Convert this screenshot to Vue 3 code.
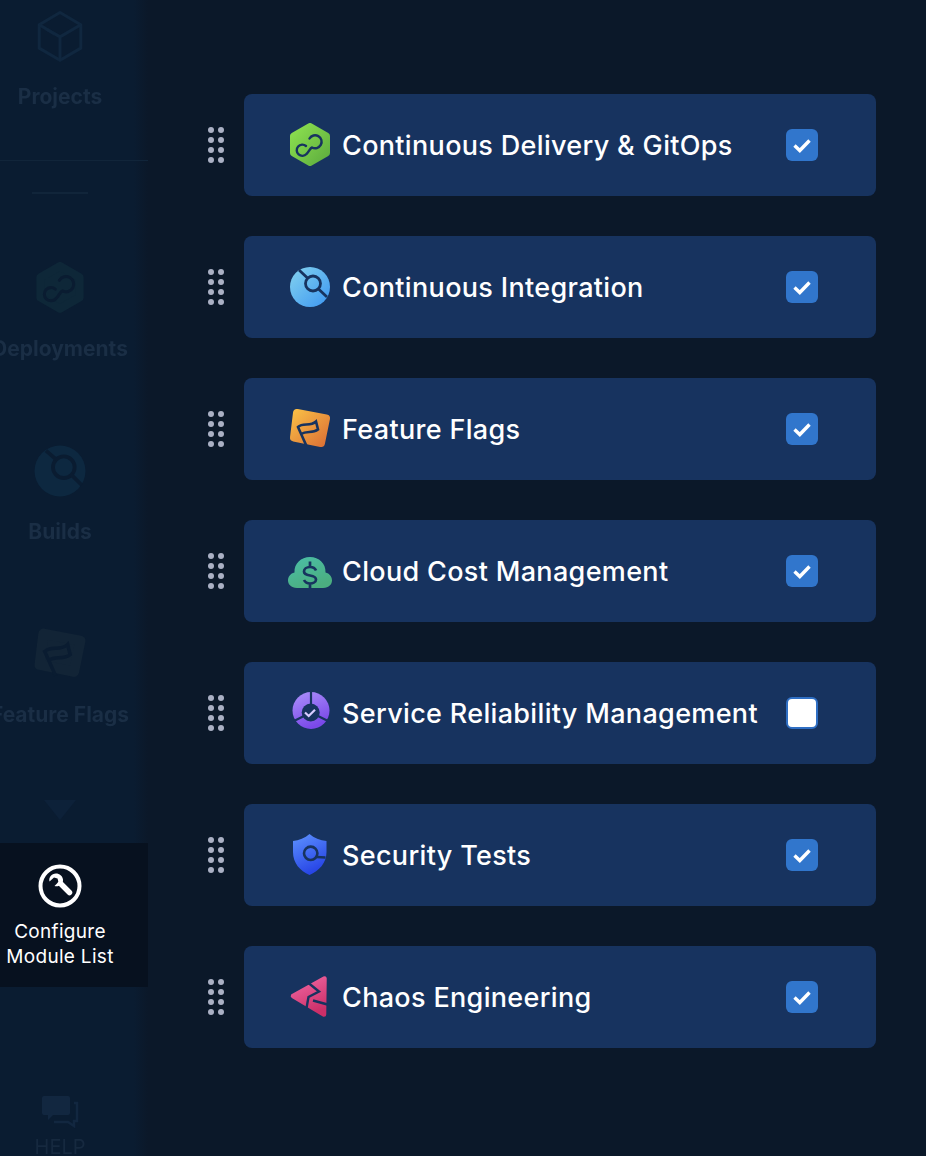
<script setup>
// 模块列表（顺序即显示顺序）
const modules = [
  { key: 'cd', name: 'Continuous Delivery & GitOps', checked: true },
  { key: 'ci', name: 'Continuous Integration', checked: true },
  { key: 'ff', name: 'Feature Flags', checked: true },
  { key: 'ccm', name: 'Cloud Cost Management', checked: true },
  { key: 'srm', name: 'Service Reliability Management', checked: false },
  { key: 'sto', name: 'Security Tests', checked: true },
  { key: 'ce', name: 'Chaos Engineering', checked: true },
]
</script>

<template>
  <div class="page">
    <!-- 左侧导航（被遮罩压暗） -->
    <aside class="sidebar">
      <div class="nav-item nav-projects">
        <div class="nav-icon">
          <svg viewBox="0 0 60 60" width="52" height="56" fill="none" stroke="#10273f" stroke-width="3.4" stroke-linejoin="round">
            <path d="M30 3 L54 17 V44 L30 58 L6 44 V17 Z" />
            <path d="M6 17 L30 31 L54 17 M30 31 V58" />
            <path d="M14 22 L24 28" />
          </svg>
        </div>
        <span class="nav-label">Projects</span>
      </div>
      <div class="nav-divider"></div>
      <div class="nav-short"></div>

      <div class="nav-item nav-first">
        <div class="nav-icon">
          <svg viewBox="0 0 44 44" width="52" height="56">
            <path d="M22 3.5 L38.5 13 V30 L22 39.5 L5.5 30 V13 Z" fill="#0e2738" stroke="#0e2738" stroke-width="7" stroke-linejoin="round" />
            <path d="M18 23 A5.6 5.6 0 1 0 18.5 31 C21 29 22 25 24 24.5 A6.5 6.5 0 1 0 21.5 15.5" fill="none" stroke="#0a1c31" stroke-width="2.6" stroke-linecap="round" />
          </svg>
        </div>
        <span class="nav-label">Deployments</span>
      </div>
      <div class="nav-item nav-next">
        <div class="nav-icon">
          <svg viewBox="8 5 44 44" width="56" height="56" fill="none">
            <circle cx="30" cy="27" r="20" fill="#0d2840" />
            <circle cx="33" cy="24" r="8.5" stroke="#0a1c31" stroke-width="3" />
            <path d="M19 11 L27 18 M39 30 L47 38" stroke="#0a1c31" stroke-width="3" />
          </svg>
        </div>
        <span class="nav-label">Builds</span>
      </div>
      <div class="nav-item nav-next">
        <div class="nav-icon">
          <svg viewBox="8 7 44 44" width="56" height="56" fill="none">
            <path d="M17 13 L46 18.5 L41 43 L14 37.5 Z" fill="#122436" stroke="#122436" stroke-width="8" stroke-linejoin="round" />
            <path d="M26.5 46 L18 27 C23 22 30 27 36 21.5 L38 29.5 C32 34 27 30 21 34" stroke="#0a1c31" stroke-width="2.8" />
          </svg>
        </div>
        <span class="nav-label">Feature Flags</span>
      </div>

      <div class="nav-caret"></div>

      <div class="nav-config">
        <svg viewBox="0 0 44 44" width="44" height="44" fill="none">
          <circle cx="22" cy="22" r="19.5" stroke="#fff" stroke-width="4" />
          <path d="M22.5 19.5 L31.5 28.5" stroke="#fff" stroke-width="5.5" stroke-linecap="round" />
          <path d="M18 9.5 C13.5 9.5 10.5 13.5 11.5 17.5 L16 13.5 L19.5 14.5 L20.5 18 L16.5 22 C20.5 23.5 25.5 20 25 15.5 C24.5 12 21.5 9.5 18 9.5 Z" fill="#fff" />
        </svg>
        <span class="config-text">Configure<br />Module List</span>
      </div>

      <div class="nav-help">
        <svg viewBox="0 0 38 34" width="38" height="34" fill="none">
          <path d="M3 1 H27 Q29 1 29 3 V18 Q29 20 27 20 H12 L7 25 V20 H3 Q1 20 1 18 V3 Q1 1 3 1 Z" fill="#122740" />
          <path d="M33 8 H36 V26 H33 V31 L27 27 H13" stroke="#122740" stroke-width="2.4" />
        </svg>
        <span class="help-label">HELP</span>
      </div>
    </aside>

    <!-- 模块配置列表 -->
    <main class="module-list">
      <div v-for="mod in modules" :key="mod.key" class="module-line">
        <div class="drag-handle">
          <span v-for="n in 8" :key="n" class="drag-dot"></span>
        </div>
        <div class="module-card">
          <span class="module-icon">
            <svg v-if="mod.key === 'cd'" viewBox="0 0 44 44" width="44" height="44">
              <defs>
                <linearGradient id="grad-cd" x1="0" y1="0" x2="1" y2="1">
                  <stop offset="0" stop-color="#8ce04f" />
                  <stop offset="1" stop-color="#5fae3f" />
                </linearGradient>
              </defs>
              <path d="M22 3.5 L38.5 13 V30 L22 39.5 L5.5 30 V13 Z" fill="url(#grad-cd)" stroke="url(#grad-cd)" stroke-width="7" stroke-linejoin="round" />
              <path d="M18 23 A5.6 5.6 0 1 0 18.5 31 C21 29 22 25 24 24.5 A6.5 6.5 0 1 0 21.5 15.5" fill="none" stroke="#17335f" stroke-width="2.4" stroke-linecap="round" />
            </svg>

            <svg v-else-if="mod.key === 'ci'" viewBox="8 5 44 44" width="44" height="44" fill="none">
              <defs>
                <linearGradient id="grad-ci" x1="0" y1="0" x2="1" y2="1">
                  <stop offset="0" stop-color="#84d3ee" />
                  <stop offset="1" stop-color="#3c96f2" />
                </linearGradient>
              </defs>
              <circle cx="30" cy="27" r="20" fill="url(#grad-ci)" />
              <circle cx="33" cy="23.5" r="7.5" stroke="#17335f" stroke-width="2.8" />
              <path d="M19 10 L27.5 18 M38.5 29 L47 37" stroke="#17335f" stroke-width="2.8" />
            </svg>

            <svg v-else-if="mod.key === 'ff'" viewBox="8 7 44 44" width="44" height="44" fill="none">
              <defs>
                <linearGradient id="grad-ff" x1="0" y1="0" x2="1" y2="1">
                  <stop offset="0" stop-color="#f8bb45" />
                  <stop offset="1" stop-color="#dd7436" />
                </linearGradient>
              </defs>
              <path d="M17 13 L46 18.5 L41 43 L14 37.5 Z" fill="url(#grad-ff)" stroke="url(#grad-ff)" stroke-width="8" stroke-linejoin="round" />
              <path d="M26.5 46 L18 27 C23 22 30 27 36 21.5 L38 29.5 C32 34 27 30 21 34" stroke="#17335f" stroke-width="2.6" />
            </svg>

            <svg v-else-if="mod.key === 'ccm'" viewBox="8 4 44 44" width="44" height="44" fill="none">
              <defs>
                <linearGradient id="grad-ccm" x1="0" y1="0" x2="0.5" y2="1">
                  <stop offset="0" stop-color="#4bbfa8" />
                  <stop offset="1" stop-color="#4bae80" />
                </linearGradient>
              </defs>
              <path d="M17 43 C11 43 8 39 8 35.5 C8 31.5 10.5 28.5 14.5 27.5 C14 18.5 21 12 30 12 C39 12 46 18.5 45.5 27.5 C49.5 28.5 52 31.5 52 35.5 C52 39 49 43 43 43 Z" fill="url(#grad-ccm)" />
              <path d="M36 25.5 C35 23 32.5 22 30 22 C26.5 22 24 24 24 26.5 C24 29 27 30 30 30.5 C33 31 36 32 36 34.5 C36 37 33 38.5 30 38.5 C27 38.5 25 37 24 35 M30 16.5 V22 M30 38.5 V43" stroke="#17335f" stroke-width="2.7" />
            </svg>

            <svg v-else-if="mod.key === 'srm'" viewBox="8 6 44 44" width="44" height="44" fill="none">
              <defs>
                <linearGradient id="grad-srm" x1="0" y1="0" x2="0.4" y2="1">
                  <stop offset="0" stop-color="#ad92fb" />
                  <stop offset="1" stop-color="#7a49e8" />
                </linearGradient>
              </defs>
              <circle cx="31" cy="25.5" r="18.5" fill="url(#grad-srm)" />
              <path d="M31 6 V20 M14 36 L25 30.5 M48 36 L37 30.5" stroke="#17335f" stroke-width="2.2" />
              <circle cx="30.7" cy="27.5" r="9" fill="#17335f" />
              <path d="M25 27.5 L28.7 31 L35 24.8" stroke="#d9ccff" stroke-width="2.2" />
            </svg>

            <svg v-else-if="mod.key === 'sto'" viewBox="8 8 44 44" width="44" height="44" fill="none">
              <defs>
                <linearGradient id="grad-sto" x1="0" y1="0" x2="0.4" y2="1">
                  <stop offset="0" stop-color="#5e93ff" />
                  <stop offset="1" stop-color="#2846e6" />
                </linearGradient>
              </defs>
              <path d="M29.5 9 C25 13 19 15.5 13 16 V27 C13 38 20 46 29.5 50 C39 46 46.5 38 46.5 27 V16 C40 15.5 34 13 29.5 9 Z" fill="url(#grad-sto)" />
              <circle cx="30.7" cy="28.3" r="6.7" stroke="#17335f" stroke-width="2.6" />
              <path d="M36.5 32 L45.5 32.5" stroke="#17335f" stroke-width="2.6" />
            </svg>

            <svg v-else viewBox="8 8 44 44" width="44" height="44" fill="none">
              <defs>
                <linearGradient id="grad-ce" x1="0.2" y1="0" x2="0.6" y2="1">
                  <stop offset="0" stop-color="#ee649f" />
                  <stop offset="1" stop-color="#cc2f68" />
                </linearGradient>
              </defs>
              <path d="M44.5 11.5 L44 47.5 L13 29 Z" fill="url(#grad-ce)" stroke="url(#grad-ce)" stroke-width="4.5" stroke-linejoin="round" />
              <path d="M28.5 16 L39 24.5 L28.5 30 L26.5 41 M33 33.5 L47.5 37.5" stroke="#17335f" stroke-width="2.4" />
            </svg>
          </span>
          <span class="module-name">{{ mod.name }}</span>
          <span class="checkbox" :class="{ 'checkbox--off': !mod.checked }">
            <svg v-if="mod.checked" viewBox="0 0 32 32" width="32" height="32" fill="none">
              <path d="M8.5 16.5 L13.8 21.5 L23.5 11.5" stroke="#fff" stroke-width="3.4" />
            </svg>
          </span>
        </div>
      </div>
    </main>
  </div>
</template>

<style scoped>
.page {
  display: flex;
  width: 926px;
  height: 1156px;
  overflow: hidden;
  background: #0b1829;
  font-family: Inter, "Liberation Sans", sans-serif;
}

.sidebar {
  display: flex;
  flex-direction: column;
  flex: none;
  width: 148px;
  height: 1156px;
  overflow: hidden;
  background: linear-gradient(to right, #0a1c31 0, #0a1c31 134px, #0b1829 148px);
}

.nav-item {
  display: flex;
  flex-direction: column;
  align-items: center;
  width: 120px;
  height: 100px;
  filter: blur(0.7px);
}

.nav-projects {
  margin-top: 8px;
}

.nav-first {
  margin-top: 66px;
}

.nav-next {
  margin-top: 83px;
}

.nav-icon {
  display: flex;
  align-items: center;
  justify-content: center;
  flex: none;
  height: 56px;
  margin-bottom: 21px;
}

.nav-label {
  font-size: 21px;
  font-weight: 700;
  line-height: 24px;
  white-space: nowrap;
  color: #1a2e45;
}

.nav-divider {
  flex: none;
  width: 148px;
  height: 1px;
  margin-top: 52px;
  background: #11253a;
}

.nav-short {
  flex: none;
  width: 56px;
  height: 2px;
  margin: 31px 0 0 32px;
  background: #11253a;
}

.nav-caret {
  flex: none;
  width: 0;
  height: 0;
  margin: 74px 0 0 44px;
  border-left: 16px solid transparent;
  border-right: 16px solid transparent;
  border-top: 20px solid #0d2139;
  filter: blur(0.7px);
}

.nav-config {
  display: flex;
  flex-direction: column;
  align-items: center;
  flex: none;
  box-sizing: border-box;
  width: 148px;
  height: 144px;
  margin-top: 23px;
  padding: 21px 28px 0 0;
  background: #07111f;
}

.config-text {
  margin-top: 11px;
  font-size: 19px;
  letter-spacing: 0.3px;
  line-height: 25px;
  text-align: center;
  white-space: nowrap;
  color: #fff;
}

.nav-help {
  display: flex;
  flex-direction: column;
  align-items: center;
  flex: none;
  width: 120px;
  margin-top: 108px;
  filter: blur(0.7px);
}

.help-label {
  margin-top: 6px;
  font-size: 20px;
  line-height: 24px;
  color: #16293f;
}

.module-list {
  display: flex;
  flex-direction: column;
  gap: 40px;
  padding: 94px 0 0 60px;
}

.module-line {
  display: flex;
  align-items: center;
  gap: 20px;
}

.drag-handle {
  display: grid;
  grid-template-columns: 6px 6px;
  gap: 4px;
  flex: none;
}

.drag-dot {
  width: 6px;
  height: 6px;
  border-radius: 50%;
  background: #aab0c4;
}

.module-card {
  display: flex;
  align-items: center;
  box-sizing: border-box;
  width: 632px;
  height: 102px;
  padding: 0 58px 0 44px;
  border-radius: 8px;
  background: #17335f;
}

.module-icon {
  display: flex;
  flex: none;
  width: 44px;
  height: 44px;
}

.module-name {
  margin-left: 10px;
  font-size: 27px;
  font-weight: 500;
  letter-spacing: 0.33px;
  white-space: nowrap;
  color: #fff;
}

.checkbox {
  display: block;
  flex: none;
  box-sizing: border-box;
  width: 32px;
  height: 32px;
  margin-left: auto;
  border-radius: 6px;
  background: #3176cc;
}

.checkbox--off {
  border: 2px solid #2f6fc4;
  background: #fff;
}
</style>

<style>
html,
body {
  background: #0b1829;
}
</style>
